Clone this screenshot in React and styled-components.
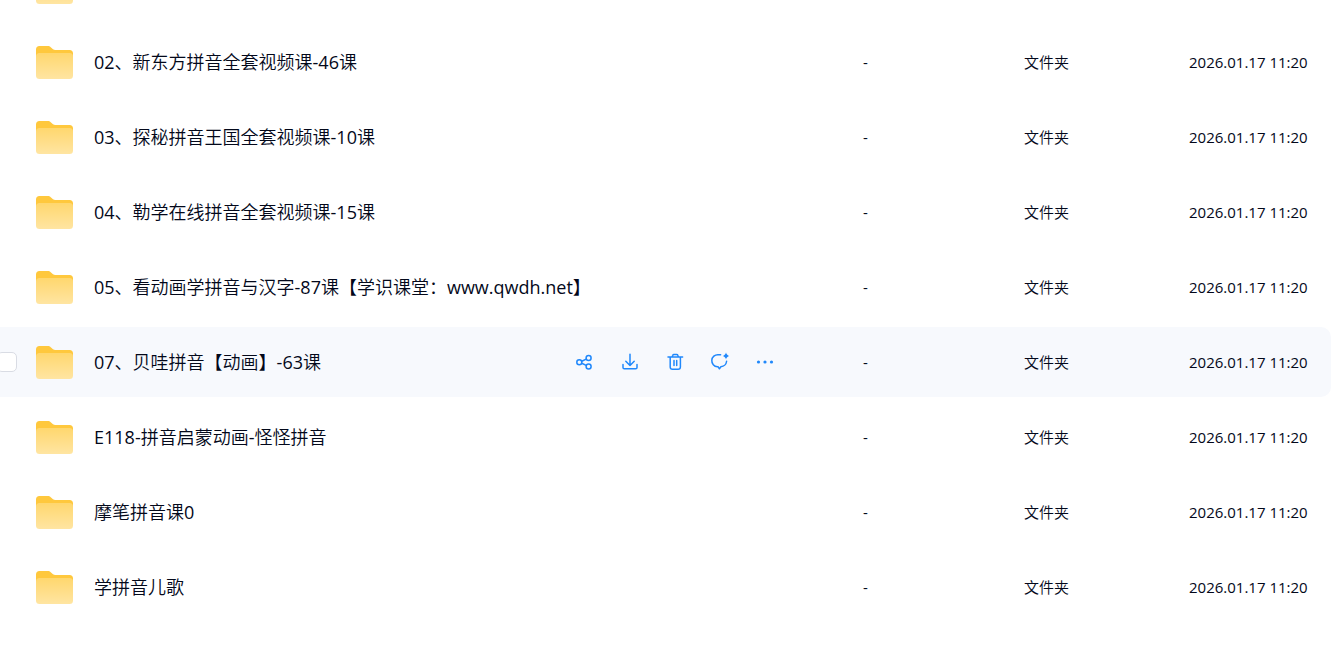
import React from 'react';
import styled, { createGlobalStyle } from 'styled-components';

const files = [
  { id: 1 },
  { id: 2, name: '02、新东方拼音全套视频课-46课' },
  { id: 3, name: '03、探秘拼音王国全套视频课-10课' },
  { id: 4, name: '04、勒学在线拼音全套视频课-15课' },
  { id: 5, name: '05、看动画学拼音与汉字-87课【学识课堂：www.qwdh.net】' },
  { id: 7, name: '07、贝哇拼音【动画】-63课', active: true },
  { id: 8, name: 'E118-拼音启蒙动画-怪怪拼音' },
  { id: 9, name: '摩笔拼音课0' },
  { id: 10, name: '学拼音儿歌' },
];

const FolderIcon = () => (
  <Folder viewBox="0 0 38 34" aria-hidden="true">
    <defs>
      <linearGradient id="folder-front" x1="0" y1="0" x2="0" y2="1">
        <stop offset="0" stopColor="#ffd76e" />
        <stop offset="1" stopColor="#ffe5a2" />
      </linearGradient>
    </defs>
    <path
      d="M0 4.5A3.5 3.5 0 0 1 3.5 1H11.5C13 1 14 1.5 15 2.4L17 4.2C17.7 4.8 18.4 5 19.3 5H33.5A3.5 3.5 0 0 1 37 8.5V20H0Z"
      fill="#ffc83d"
    />
    <rect x="0" y="8" width="37" height="26" rx="3.5" fill="url(#folder-front)" />
  </Folder>
);

const actions = [
  {
    label: '分享',
    icon: (
      <>
        <circle cx="4.3" cy="10.2" r="2.5" />
        <circle cx="13.6" cy="6" r="2.5" />
        <circle cx="13.6" cy="14.5" r="2.5" />
        <path d="M6.7 9.2 11.2 7.1M6.7 11.3l4.5 2.1" />
      </>
    ),
  },
  {
    label: '下载',
    icon: <path d="M10 2.3v11.2M5.8 9.3l4.2 4.2 4.2-4.2M3 12.4v3.1a1.3 1.3 0 0 0 1.3 1.3h11.4a1.3 1.3 0 0 0 1.3-1.3v-3.1" />,
  },
  {
    label: '删除',
    icon: <path d="M3 4.9h14.6M7.2 4.7l.6-1.5a1.2 1.2 0 0 1 1.1-.8h2.8a1.2 1.2 0 0 1 1.1.8l.6 1.5M5.2 5v10a2.3 2.3 0 0 0 2.3 2.3h5.6a2.3 2.3 0 0 0 2.3-2.3V5M9 8.5v5M11.7 8.5v5" />,
  },
  {
    label: '重命名',
    icon: (
      <>
        <path d="M10.6 2.7H8.2a6 6 0 0 0-.8 12h.6l1.4 2.1 1.5-2.1a6 6 0 0 0 5.7-5.4" />
        <path
          d="M16 .6c.6 2.2 1.2 2.8 3.3 3.4-2.1.6-2.7 1.2-3.3 3.4-.6-2.2-1.2-2.8-3.3-3.4 2.1-.6 2.7-1.2 3.3-3.4z"
          fill="currentColor"
          stroke="none"
        />
        <circle cx="16" cy="4" r="1.7" fill="currentColor" stroke="none" />
      </>
    ),
  },
  {
    label: '更多',
    icon: (
      <g fill="currentColor" stroke="none">
        <circle cx="3.5" cy="10" r="1.6" />
        <circle cx="10" cy="10" r="1.6" />
        <circle cx="16.5" cy="10" r="1.6" />
      </g>
    ),
  },
];

const FileRow = ({ name, active }) => (
  <Row $active={active}>
    <td>{active && <Checkbox type="checkbox" aria-label={name} />}</td>
    <td>
      <NameCell>
        <FolderIcon />
        <Name>{name}</Name>
        {active && (
          <Actions>
            {actions.map(({ label, icon }) => (
              <Action key={label} type="button" aria-label={label}>
                <svg viewBox="0 0 20 20">{icon}</svg>
              </Action>
            ))}
          </Actions>
        )}
      </NameCell>
    </td>
    <td>{name && '-'}</td>
    <td>{name && '文件夹'}</td>
    <DateCell>{name && '2026.01.17 11:20'}</DateCell>
  </Row>
);

const App = () => (
  <Viewport>
    <GlobalStyle />
    <Table>
      <colgroup>
        <Col $width={36} />
        <col />
        <Col $width={161} />
        <Col $width={165} />
        <Col $width={142} />
      </colgroup>
      <tbody>
        {files.map(file => (
          <FileRow key={file.id} name={file.name} active={file.active} />
        ))}
      </tbody>
    </Table>
  </Viewport>
);

const GlobalStyle = createGlobalStyle`
  * {
    box-sizing: border-box;
  }

  body {
    margin: 0;
    background: #fff;
    color: #03081a;
    font-family: 'Open Sans', 'Noto Sans CJK SC DemiLight', 'Noto Sans CJK SC', sans-serif;
  }
`;

const Viewport = styled.main`
  height: 100vh;
  overflow: hidden;
`;

/* the list is scrolled part of the way past its first row */
const Table = styled.table`
  width: 100%;
  margin-top: -53px;
  table-layout: fixed;
  border-collapse: separate;
  border-spacing: 0 5px;
`;

const Col = styled.col`
  width: ${({ $width }) => $width}px;
`;

const Row = styled.tr`
  height: 70px;

  td {
    padding: 0;
    background: ${({ $active }) => ($active ? '#f7f9fd' : 'transparent')};
    font-size: 15px;
    line-height: 20px;
    white-space: nowrap;
    vertical-align: middle;
  }
`;

const DateCell = styled.td`
  border-radius: 0 10px 10px 0;
`;

const Checkbox = styled.input`
  display: block;
  appearance: none;
  width: 20px;
  height: 20px;
  margin: 0 0 0 -3px;
  border: 1px solid #d9dce4;
  border-radius: 5px;
  background: #fff;
`;

const NameCell = styled.div`
  display: flex;
  align-items: center;
`;

const Folder = styled.svg`
  flex: none;
  width: 38px;
  height: 34px;
  margin-right: 20px;
`;

const Name = styled.span`
  flex: 1;
  font-size: 18px;
  line-height: 24px;
`;

const Actions = styled.div`
  display: flex;
  gap: 25px;
  margin-right: 88px;
`;

const Action = styled.button`
  width: 20px;
  height: 20px;
  padding: 0;
  border: none;
  background: transparent;
  color: #2088fb;
  cursor: pointer;

  svg {
    display: block;
    fill: none;
    stroke: currentColor;
    stroke-width: 1.5;
    stroke-linecap: round;
    stroke-linejoin: round;
  }
`;

export default App;
